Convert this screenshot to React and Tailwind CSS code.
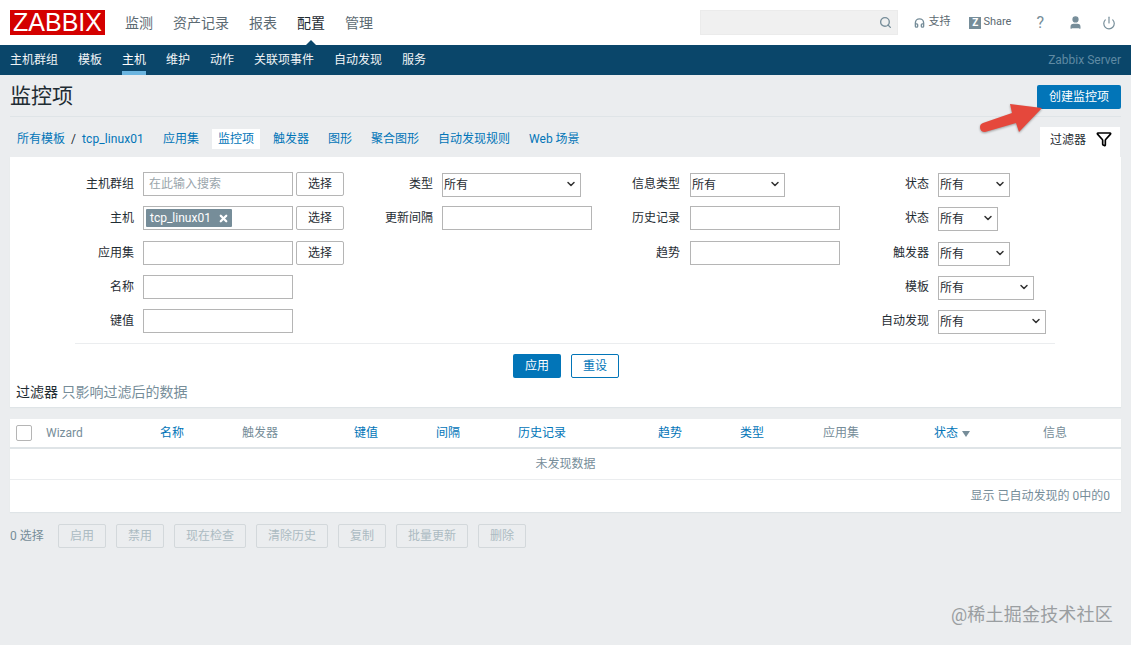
import { Search, Headphones, User, Power, ChevronDown, X, Filter } from "lucide-react";

const topNav = ["监测", "资产记录", "报表", "配置", "管理"];
const subNav = ["主机群组", "模板", "主机", "维护", "动作", "关联项事件", "自动发现", "服务"];
const tabs = ["应用集", "监控项", "触发器", "图形", "聚合图形", "自动发现规则", "Web 场景"];
const actions = ["启用", "禁用", "现在检查", "清除历史", "复制", "批量更新", "删除"];
const columns = [
  ["Wizard", false],
  ["名称", true],
  ["触发器", false],
  ["键值", true],
  ["间隔", true],
  ["历史记录", true],
  ["趋势", true],
  ["类型", true],
  ["应用集", false],
  ["状态", true],
  ["信息", false],
];

function Field({ label, labelWidth, gap = "gap-[9px]", children }) {
  return (
    <div className={`flex items-center h-6 ${gap}`}>
      <div className={`text-right text-[12px] text-[#1f2c33] shrink-0 ${labelWidth}`}>{label}</div>
      <div className="flex gap-[3px]">{children}</div>
    </div>
  );
}

function TextBox({ width = "w-[150px]", placeholder }) {
  return (
    <input
      placeholder={placeholder}
      className={`h-6 border border-[#b5b5b5] bg-white px-[5px] text-[12px] placeholder:text-[#9aa5ab] ${width}`}
    />
  );
}

function SelectBox({ width }) {
  return (
    <div className={`relative h-6 ${width}`}>
      <select className="w-full h-full appearance-none border border-[#b5b5b5] bg-white pl-[1px] text-[12px] text-[#1f2c33]">
        <option>所有</option>
      </select>
      <ChevronDown className="absolute right-[4px] top-[6px] w-3 h-3 text-[#333] pointer-events-none" strokeWidth={3} />
    </div>
  );
}

function PickButton() {
  return (
    <button className="h-6 w-12 border border-[#b5b5b5] rounded-[2px] bg-white text-[12px] text-[#1f2c33]">选择</button>
  );
}

export default function App() {
  return (
    <div className="relative w-[1131px] h-[645px] overflow-hidden bg-[#ebedef] font-['Roboto','Noto_Sans_CJK_SC',sans-serif] text-[#1f2c33]">
      {/* Top bar */}
      <div className="h-[45px] bg-white flex items-center pl-[10px] pr-[15px]">
        <div className="w-[95px] h-[25px] bg-[#d40000] text-white text-[25px] leading-[25px] text-center font-['Liberation_Sans',sans-serif]">ZABBIX</div>
        <nav className="flex gap-5 ml-5 mt-[1px] text-[14px] text-[#5c6a72]">
          {topNav.map((item) => (
            <a key={item} className={`relative ${item === "配置" ? "text-[#1f2c33]" : ""}`}>
              {item}
              {item === "配置" && (
                <span className="absolute left-[7px] top-[27px] w-0 h-0 border-x-[7px] border-x-transparent border-b-[7px] border-b-[#0a466a]" />
              )}
            </a>
          ))}
        </nav>
        <div className="ml-auto w-[198px] h-[25px] bg-[#f0f0f0] border border-[#ebebeb] flex items-center justify-end pr-[5px]">
          <Search className="w-[13px] h-[13px] text-[#768d99]" strokeWidth={2.5} />
        </div>
        <div className="flex items-center gap-[3px] ml-[16px] text-[11px] text-[#5c6a72]">
          <Headphones className="w-[11px] h-[12px] text-[#768d99]" strokeWidth={3} />
          支持
        </div>
        <div className="flex items-center gap-[2px] ml-[19px] text-[11px] text-[#5c6a72]">
          <span className="w-3 h-3 bg-[#768d99] text-white text-[10px] leading-3 font-bold text-center">Z</span>
          Share
        </div>
        <span className="ml-[25px] text-[16px] text-[#768d99]">?</span>
        <User className="w-[15px] h-[15px] ml-[24px] text-[#768d99] fill-[#768d99]" />
        <Power className="w-[14px] h-[14px] ml-[19px] text-[#768d99]" strokeWidth={2} />
      </div>

      {/* Sub nav */}
      <div className="h-[30px] bg-[#0a466a] flex items-center justify-between px-[10px] text-[12px]">
        <div className="flex gap-5 h-full">
          {subNav.map((item) => (
            <a key={item} className={`leading-[30px] text-[#f0f4f6] ${item === "主机" ? "text-white border-b-4 border-[#6bb5e0]" : ""}`}>
              {item}
            </a>
          ))}
        </div>
        <span className="text-[#5f8aa3]">Zabbix Server</span>
      </div>

      {/* Title */}
      <div className="mx-[10px] h-[42px] flex items-center justify-between border-b border-[#dfe4e7]">
        <h1 className="text-[21px] font-normal text-[#1f2c33] mt-[2px]">监控项</h1>
        <button className="w-[84px] h-6 mt-[2px] bg-[#0275b8] rounded-[2px] text-white text-[12px]">创建监控项</button>
      </div>

      {/* Tabs */}
      <div className="flex items-center h-10 pl-[17px] pr-[11px] pt-[3px] text-[12px] text-[#0275b8]">
        <a>所有模板</a>
        <span className="mx-[6px] text-[#1f2c33]">/</span>
        <a className="tracking-[0.1px]">tcp_linux01</a>
        <div className="flex items-center gap-[7px] ml-[13px]">
          {tabs.map((t) => (
            <a key={t} className={`px-[6px] h-5 leading-5 whitespace-nowrap ${t === "监控项" ? "bg-white" : ""}`}>{t}</a>
          ))}
        </div>
        <div className="ml-auto self-end w-[80px] h-[30px] bg-white flex items-start pt-[4px] pl-[10px] gap-[10px] text-[#1f2c33]">
          过滤器
          <Filter className="w-4 h-4 text-black" strokeWidth={2.5} />
        </div>
      </div>

      {/* Filter panel */}
      <section className="mx-[10px] h-[250px] bg-white shadow-[0_1px_1px_#dfe4e7] pt-[15px] px-[6px]">
        <div className="flex -ml-[6px]">
          <div className="w-[375px] flex flex-col gap-[10.25px]">
            <Field label="主机群组" labelWidth="w-[124px]">
              <TextBox placeholder="在此输入搜索" />
              <PickButton />
            </Field>
            <Field label="主机" labelWidth="w-[124px]">
              <div className="w-[150px] h-6 border border-[#b5b5b5] flex items-center pl-[2px]">
                <span className="h-[18px] bg-[#768d99] rounded-[1px] text-white text-[12px] leading-[18px] pl-1 pr-[3px] flex items-center gap-[7px]">
                  tcp_linux01
                  <X className="w-[11px] h-[11px]" strokeWidth={5} />
                </span>
              </div>
              <PickButton />
            </Field>
            <Field label="应用集" labelWidth="w-[124px]">
              <TextBox />
              <PickButton />
            </Field>
            <Field label="名称" labelWidth="w-[124px]">
              <TextBox />
            </Field>
            <Field label="键值" labelWidth="w-[124px]">
              <TextBox />
            </Field>
          </div>
          <div className="w-[235px] flex flex-col gap-[10.25px]">
            <Field label="类型" labelWidth="w-[48px]">
              <SelectBox width="w-[139px]" />
            </Field>
            <Field label="更新间隔" labelWidth="w-[48px]">
              <TextBox />
            </Field>
          </div>
          <div className="w-[240px] flex flex-col gap-[10.25px]">
            <Field label="信息类型" labelWidth="w-[60px]" gap="gap-[10px]">
              <SelectBox width="w-[95px]" />
            </Field>
            <Field label="历史记录" labelWidth="w-[60px]" gap="gap-[10px]">
              <TextBox />
            </Field>
            <Field label="趋势" labelWidth="w-[60px]" gap="gap-[10px]">
              <TextBox />
            </Field>
          </div>
          <div className="flex flex-col gap-[10.25px]">
            <Field label="状态" labelWidth="w-[69px]">
              <SelectBox width="w-[72px]" />
            </Field>
            <Field label="状态" labelWidth="w-[69px]">
              <SelectBox width="w-[60px]" />
            </Field>
            <Field label="触发器" labelWidth="w-[69px]">
              <SelectBox width="w-[72px]" />
            </Field>
            <Field label="模板" labelWidth="w-[69px]">
              <SelectBox width="w-[96px]" />
            </Field>
            <Field label="自动发现" labelWidth="w-[69px]">
              <SelectBox width="w-[108px]" />
            </Field>
          </div>
        </div>
        <div className="mt-[10px] ml-[59px] mr-[60px] border-t border-[#ebedef]" />
        <div className="flex justify-center gap-[10px] mt-[10px] pl-[1px]">
          <button className="w-12 h-6 bg-[#0275b8] rounded-[2px] text-white text-[12px]">应用</button>
          <button className="w-12 h-6 border border-[#0275b8] rounded-[2px] bg-white text-[#0275b8] text-[12px]">重设</button>
        </div>
        <div className="mt-[4px] text-[14px] leading-5 text-[#768d99]">
          <span className="text-[#1f2c33]">过滤器</span> 只影响过滤后的数据
        </div>
      </section>

      {/* Table */}
      <section className="mx-[10px] mt-[12px] bg-white shadow-[0_1px_1px_#dfe4e7] text-[12px]">
        <div className="h-[30px] grid grid-cols-[36px_114px_82px_112px_82px_82px_140px_82px_83px_111px_109px_1fr] items-center border-b-2 border-[#dfe4e7]">
          <span className="ml-[6px] w-4 h-4 border border-[#b5b5b5] rounded-[2px]" />
          {columns.map(([name, link]) => (
            <span key={name} className={`flex items-center gap-1 ${link ? "text-[#0275b8]" : "text-[#768d99]"}`}>
              {name}
              {name === "状态" && <span className="w-0 h-0 border-x-[4px] border-x-transparent border-t-[6px] border-t-[#768d99] mt-[1px]" />}
            </span>
          ))}
        </div>
        <div className="h-[31px] leading-[31px] text-center text-[#768d99] border-b border-[#ebedef]">未发现数据</div>
        <div className="h-[32px] leading-[33px] text-right pr-[11px] text-[#768d99]">显示 已自动发现的 0中的0</div>
      </section>

      {/* Selection actions */}
      <div className="flex items-center mx-[10px] mt-[12px] gap-[10px] text-[12px]">
        <span className="w-[38px] text-[#768d99]">0 选择</span>
        {actions.map((a) => (
          <button key={a} className={`h-6 border border-[#d3d8db] rounded-[2px] bg-[#ebedef] text-[#acbbc2] ${a.length > 2 ? "w-[72px]" : "w-12"}`}>{a}</button>
        ))}
      </div>

      {/* Annotation arrow */}
      <svg className="absolute left-[975px] top-[100px] drop-shadow-[0_1px_1px_rgba(0,0,0,0.35)]" width="72" height="36" viewBox="0 0 72 36">
        <path d="M8 23 L37 13 L35 4 L67 8 L44 32 L41 23 L10 32 Q5 32 5 27 Q5 24 8 23 Z" fill="#e5483c" />
      </svg>

      {/* Watermark */}
      <div className="absolute left-[951px] top-[603px] text-[18px] leading-6 tracking-[0.2px] text-[#9a9ea1]">@稀土掘金技术社区</div>
    </div>
  );
}
